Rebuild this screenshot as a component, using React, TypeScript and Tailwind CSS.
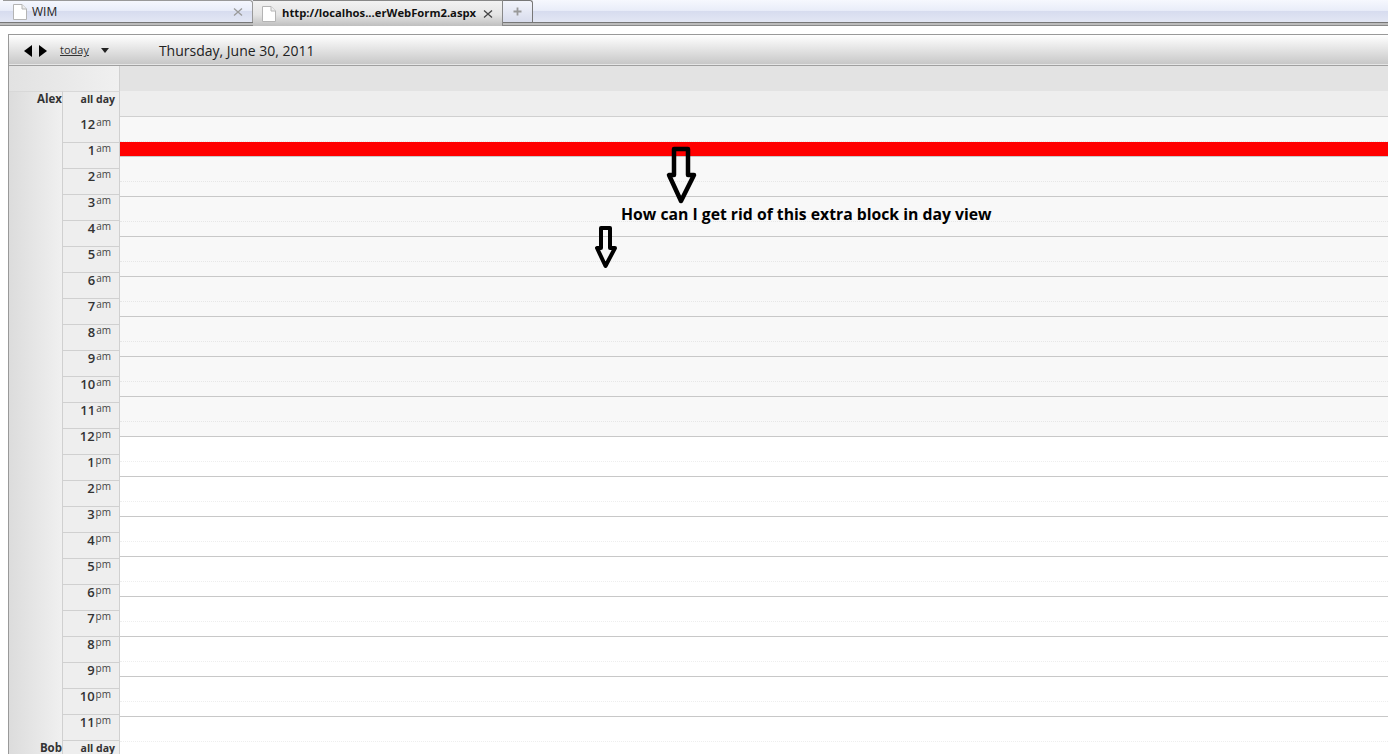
const hours = ['12', '1', '2', '3', '4', '5', '6', '7', '8', '9', '10', '11'];

const GutterRow = ({ hour, suffix, first }: { hour: string; suffix: string; first?: boolean }) => (
  <div className={`h-[26px] pr-[8px] flex justify-end items-start text-[#333] ${first ? 'pt-[1px]' : 'border-t border-[#d0d0d0]'}`}>
    <span className="text-[13px] leading-[15px] font-semibold font-['Open_Sans',sans-serif]">{hour}</span>
    <span className="text-[10px] leading-[10px] ml-[1px] text-[#444] font-['Open_Sans',sans-serif]">{suffix}</span>
  </div>
);

const Slot = ({ shaded }: { shaded: boolean }) => (
  <div className={`h-[40px] border-b border-[#c8c8c8] ${shaded ? 'bg-[#f8f8f8]' : 'bg-white'}`}>
    <div className={`h-[24px] border-b border-dotted box-content ${shaded ? 'border-[#e6e6e6]' : 'border-[#eeeeee]'}`} />
  </div>
);

const PageIcon = () => (
  <svg width="14" height="16" viewBox="0 0 14 16" className="shrink-0">
    <path d="M0.5 0.5H9L13.5 5V15.5H0.5Z" fill="#fff" stroke="#b4b4b4" />
    <path d="M9 0.5V5H13.5" fill="#eee" stroke="#b4b4b4" />
  </svg>
);

const CloseIcon = ({ color }: { color: string }) => (
  <svg width="10" height="10" viewBox="0 0 10 10" className="shrink-0">
    <path d="M1 1.5L9 8.5M9 1.5L1 8.5" stroke={color} strokeWidth="1.3" />
  </svg>
);

const Arrow = ({ size }: { size: 'big' | 'small' }) =>
  size === 'big' ? (
    <svg width="32" height="60" viewBox="0 0 32 60" className="absolute left-[666px] top-[146px]">
      <path d="M8 3H22V29H28L15 55L3 29H8Z" fill="none" stroke="#000" strokeWidth="4.5" strokeLinejoin="round" />
    </svg>
  ) : (
    <svg width="24" height="46" viewBox="0 0 24 46" className="absolute left-[594px] top-[225px]">
      <path d="M7 3H16V23H21L11.5 41L3 23H7Z" fill="none" stroke="#000" strokeWidth="4" strokeLinejoin="round" />
    </svg>
  );

export default function App() {
  return (
    <div className="relative w-[1388px] h-[754px] overflow-hidden bg-white font-['Liberation_Sans',sans-serif]">
      {/* browser tabs */}
      <div className="h-[26px] bg-[linear-gradient(#f6f8fe_0%,#e9edf9_40%,#d7dcef_44%,#e3e7f4_85%)] flex items-start pl-[3px] relative">
        <div className="absolute left-0 right-0 top-[22px] h-[4px] bg-[#bcbcbc] border-t border-[#777] border-b border-b-[#8a8a8a]" />
        <div className="relative w-[250px] h-[22px] flex items-center pl-[10px] pr-[9px] gap-[5px] border-t border-r border-[#999] rounded-tr-[3px] font-['Open_Sans',sans-serif]">
          <PageIcon />
          <span className="text-[12px] text-[#222] flex-1">WIM</span>
          <CloseIcon color="#9a9a9a" />
        </div>
        <div className="relative w-[250px] h-[26px] flex items-center pl-[9px] pr-[9px] gap-[6px] bg-[linear-gradient(#f2f2f2,#e4e4e4_55%,#bfbfbf)] border-t border-[#888] border-r">
          <PageIcon />
          <span className="text-[11.25px] font-bold text-[#111] flex-1 whitespace-nowrap font-['Open_Sans',sans-serif]">http://localhos...erWebForm2.aspx</span>
          <CloseIcon color="#444" />
        </div>
        <div className="relative w-[30px] h-[22px] flex items-center justify-center border-t border-r border-[#777] rounded-tr-[3px] bg-[linear-gradient(#f2f4fb,#d8dcec)]">
          <svg width="9" height="9" viewBox="0 0 9 9">
            <path d="M4.5 0.5V8.5M0.5 4.5H8.5" stroke="#999" strokeWidth="1.8" />
          </svg>
        </div>
      </div>

      {/* calendar */}
      <div className="mt-[8px] ml-[8px] border-l border-t border-[#999]">
        <div className="h-[31px] pt-[1px] flex items-center bg-[linear-gradient(#ffffff,#c6c6c6)] border-b border-[#a0a0a0] shadow-[inset_0_-1px_0_#e6e6e6] pl-[14px] font-['Open_Sans',sans-serif]">
          <span className="w-0 h-0 border-y-[6px] border-y-transparent border-r-[8px] border-r-black ml-[1px]" />
          <span className="w-0 h-0 border-y-[6px] border-y-transparent border-l-[8px] border-l-black ml-[7px]" />
          <span className="ml-[13px] text-[11px] text-[#333] underline">today</span>
          <span className="ml-[12px] w-0 h-0 border-x-[4px] border-x-transparent border-t-[5px] border-t-[#222]" />
          <span className="ml-[50px] text-[14px] text-[#222]">Thursday, June 30, 2011</span>
        </div>

        <div className="flex h-[25px]">
          <div className="w-[111px] bg-[linear-gradient(to_right,#e2e2e2,#f0f0f0)] border-r border-[#d0d0d0]" />
          <div className="flex-1 bg-[#e3e3e3]" />
        </div>

        <div className="flex">
          <div className="w-[54px] flex flex-col bg-[linear-gradient(to_right,#dcdcdc,#f0f0f0)] border-r border-t border-t-[#d8d8d8] border-r-[#d0d0d0] font-['Open_Sans',sans-serif]">
            <div className="h-[650px] text-right text-[11.5px] font-bold text-[#333] leading-[14px]">Alex</div>
            <div className="text-right text-[11.5px] font-bold text-[#333] leading-[10px] mt-[1px]">Bob</div>
          </div>
          <div className="w-[57px] flex flex-col bg-[#eeeeee] border-r border-t border-t-[#d8d8d8] border-r-[#d0d0d0]">
            <div className="h-[24px] pr-[4px] text-right text-[10.5px] font-bold text-[#333] leading-[14px] font-['Open_Sans',sans-serif]">all day</div>
            {['am', 'pm'].map((suffix) =>
              hours.map((hour, i) => (
                <GutterRow key={suffix + hour} hour={hour} suffix={suffix} first={suffix === 'am' && i === 0} />
              ))
            )}
            <div className="h-[12px] border-t border-[#d0d0d0] pr-[4px] text-right text-[10.5px] font-bold text-[#333] leading-[10px] pt-[2px] font-['Open_Sans',sans-serif]">all day</div>
          </div>
          <div className="flex-1 flex flex-col">
            <div className="h-[26px] bg-[#eeeeee] border-b border-[#d0d0d0]" />
            <div className="relative">
              {Array.from({ length: 8 }).map((_, i) => <Slot key={i} shaded />)}
              {Array.from({ length: 8 }).map((_, i) => <Slot key={i} shaded={false} />)}
              <div className="absolute left-0 right-0 top-[25px] h-[14px] bg-[#ff0000]" />
            </div>
          </div>
        </div>
      </div>

      {/* annotation over the screenshot */}
      <Arrow size="big" />
      <Arrow size="small" />
      <div className="absolute left-[621px] top-[203px] text-[15.75px] leading-[22px] font-bold text-black whitespace-nowrap font-['Open_Sans',sans-serif]">
        How can I get rid of this extra block in day view
      </div>
    </div>
  );
}
